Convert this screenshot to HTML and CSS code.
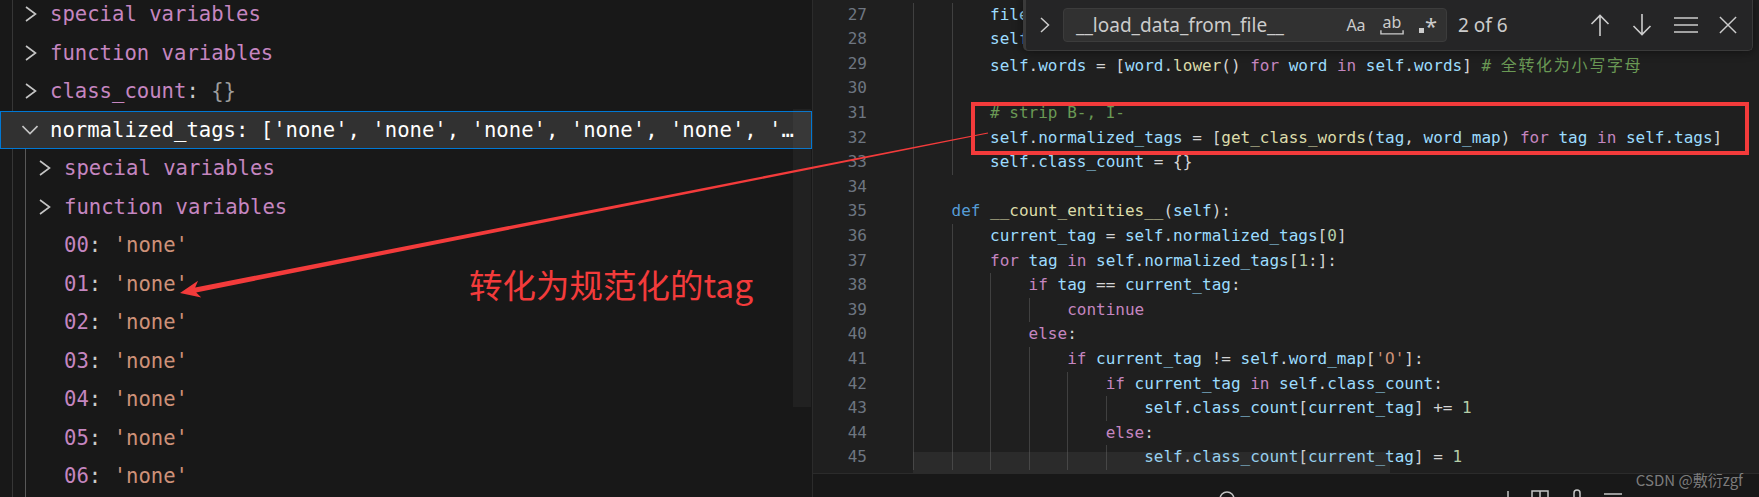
FILE: index.html
```html
<!DOCTYPE html>
<html><head>
<meta charset="utf-8">
<title>normalized_tags - debug</title>
<link rel="stylesheet" href="styles.css">
</head>
<body>
<div class="win">

<div class="vars">
  <div class="tree">
    <div class="row l0"><span class="twist"><svg viewBox="0 0 16 16"><path d="M4 1l9.5 7L4 15"/></svg></span><span class="nm">special variables</span></div>
    <div class="row l0"><span class="twist"><svg viewBox="0 0 16 16"><path d="M4 1l9.5 7L4 15"/></svg></span><span class="nm">function variables</span></div>
    <div class="row l0"><span class="twist"><svg viewBox="0 0 16 16"><path d="M4 1l9.5 7L4 15"/></svg></span><span class="nm">class_count</span><span class="pu">: </span><span class="ob">{}</span></div>
    <div class="row l0 sel"><span class="twist"><svg class="down" viewBox="0 0 16 16"><path d="M0.5 4l7.5 7.5L15.5 4"/></svg></span><span>normalized_tags: ['none', 'none', 'none', 'none', 'none', '…</span></div>
    <div class="row l1"><span class="twist"><svg viewBox="0 0 16 16"><path d="M4 1l9.5 7L4 15"/></svg></span><span class="nm">special variables</span></div>
    <div class="row l1"><span class="twist"><svg viewBox="0 0 16 16"><path d="M4 1l9.5 7L4 15"/></svg></span><span class="nm">function variables</span></div>
    <div class="row l1"><span class="twist"></span><span class="nm">00</span><span class="pu">: </span><span class="st">'none'</span></div>
    <div class="row l1"><span class="twist"></span><span class="nm">01</span><span class="pu">: </span><span class="st">'none'</span></div>
    <div class="row l1"><span class="twist"></span><span class="nm">02</span><span class="pu">: </span><span class="st">'none'</span></div>
    <div class="row l1"><span class="twist"></span><span class="nm">03</span><span class="pu">: </span><span class="st">'none'</span></div>
    <div class="row l1"><span class="twist"></span><span class="nm">04</span><span class="pu">: </span><span class="st">'none'</span></div>
    <div class="row l1"><span class="twist"></span><span class="nm">05</span><span class="pu">: </span><span class="st">'none'</span></div>
    <div class="row l1"><span class="twist"></span><span class="nm">06</span><span class="pu">: </span><span class="st">'none'</span></div>
    <div class="row l1"><span class="twist"></span></div>
  </div>
  <div class="thumb-v"></div>
</div>

<div class="editor">
  <div class="code">
    <div class="gutter">
      <div>27</div><div>28</div><div>29</div><div>30</div><div>31</div><div>32</div><div>33</div><div>34</div><div>35</div><div>36</div>
      <div>37</div><div>38</div><div>39</div><div>40</div><div>41</div><div>42</div><div>43</div><div>44</div><div>45</div>
    </div>
    <div class="lines">
      <div class="line"><span class="g"></span><span class="g"></span><span class="v">file</span></div>
      <div class="line"><span class="g"></span><span class="g"></span><span class="v">self</span></div>
      <div class="line"><span class="g"></span><span class="g"></span><span class="v">self</span>.<span class="v">words</span> = [<span class="v">word</span>.<span class="f">lower</span>() <span class="k">for</span> <span class="v">word</span> <span class="k">in</span> <span class="v">self</span>.<span class="v">words</span>] <span class="c"># <span class="cjk">全转化为小写字母</span></span></div>
      <div class="line"><span class="g"></span><span class="g"></span></div>
      <div class="line"><span class="g"></span><span class="g"></span><span class="c"># strip B-, I-</span></div>
      <div class="line"><span class="g"></span><span class="g"></span><span class="v">self</span>.<span class="v">normalized_tags</span> = [<span class="f">get_class_words</span>(<span class="v">tag</span>, <span class="v">word_map</span>) <span class="k">for</span> <span class="v">tag</span> <span class="k">in</span> <span class="v">self</span>.<span class="v">tags</span>]</div>
      <div class="line"><span class="g"></span><span class="g"></span><span class="v">self</span>.<span class="v">class_count</span> = {}</div>
      <div class="line"><span class="g"></span></div>
      <div class="line"><span class="g"></span><span class="d">def</span> <span class="f">__count_entities__</span>(<span class="v">self</span>):</div>
      <div class="line"><span class="g"></span><span class="g"></span><span class="v">current_tag</span> = <span class="v">self</span>.<span class="v">normalized_tags</span>[<span class="n">0</span>]</div>
      <div class="line"><span class="g"></span><span class="g"></span><span class="k">for</span> <span class="v">tag</span> <span class="k">in</span> <span class="v">self</span>.<span class="v">normalized_tags</span>[<span class="n">1</span>:]:</div>
      <div class="line"><span class="g"></span><span class="g"></span><span class="g"></span><span class="k">if</span> <span class="v">tag</span> == <span class="v">current_tag</span>:</div>
      <div class="line"><span class="g"></span><span class="g"></span><span class="g"></span><span class="g"></span><span class="k">continue</span></div>
      <div class="line"><span class="g"></span><span class="g"></span><span class="g"></span><span class="k">else</span>:</div>
      <div class="line"><span class="g"></span><span class="g"></span><span class="g"></span><span class="g"></span><span class="k">if</span> <span class="v">current_tag</span> != <span class="v">self</span>.<span class="v">word_map</span>[<span class="s">'O'</span>]:</div>
      <div class="line"><span class="g"></span><span class="g"></span><span class="g"></span><span class="g"></span><span class="g"></span><span class="k">if</span> <span class="v">current_tag</span> <span class="k">in</span> <span class="v">self</span>.<span class="v">class_count</span>:</div>
      <div class="line"><span class="g"></span><span class="g"></span><span class="g"></span><span class="g"></span><span class="g"></span><span class="g"></span><span class="v">self</span>.<span class="v">class_count</span>[<span class="v">current_tag</span>] += <span class="n">1</span></div>
      <div class="line"><span class="g"></span><span class="g"></span><span class="g"></span><span class="g"></span><span class="g"></span><span class="k">else</span>:</div>
      <div class="line"><span class="g"></span><span class="g"></span><span class="g"></span><span class="g"></span><span class="g"></span><span class="g"></span><span class="v">self</span>.<span class="v">class_count</span>[<span class="v">current_tag</span>] = <span class="n">1</span></div>
    </div>
    <div class="thumb-h"></div>
  </div>

  <div class="panel">
    <svg class="pi" style="left:402px" viewBox="0 0 24 12"><circle cx="12" cy="13" r="7"/></svg>
    <svg class="pi" style="left:683px" viewBox="0 0 24 12"><path d="M12 5v8"/></svg>
    <svg class="pi" style="left:715px" viewBox="0 0 24 12"><path d="M4 13V5h16v8M12 5v8"/></svg>
    <svg class="pi" style="left:752px" viewBox="0 0 24 12"><path d="M9 13V7a3 3 0 0 1 6 0v6"/></svg>
    <svg class="pi" style="left:788px" viewBox="0 0 24 12"><path d="M3 8h18"/></svg>
  </div>

  <div class="find">
    <span class="toggle"><svg viewBox="0 0 12 16"><path d="M2 1l7.5 7L2 15"/></svg></span>
    <div class="input">
      <span class="term">__load_data_from_file__</span>
      <span class="opts">
        <span class="opt aa">Aa</span>
        <span class="opt ab">ab<svg viewBox="0 0 26 6"><path d="M1 0v4h24V0"/></svg></span>
        <span class="opt rx"><i class="dot"></i>*</span>
      </span>
    </div>
    <span class="count">2 of 6</span>
    <span class="btns">
      <svg class="ico" viewBox="0 0 22 24"><path d="M11 2.5V23M2.5 11l8.5-8.5 8.5 8.5"/></svg>
      <svg class="ico" viewBox="0 0 22 24"><path d="M11 1v20.5M2.5 13l8.5 8.5 8.5-8.5"/></svg>
      <svg class="ico sel-ico" viewBox="0 0 26 24"><path d="M1 5h24M1 12h24M1 19h24"/></svg>
      <svg class="ico x" viewBox="0 0 20 20"><path d="M1 1l18 18M19 1L1 19"/></svg>
    </span>
  </div>
</div>

<svg class="arrow" viewBox="0 0 1759 497">
  <polygon points="180,293 201.3,297.4 196.2,292.4 988.1,133.6 987.9,132.4 195.2,287.4 198,280.8"/>
</svg>
<div class="box"></div>
<div class="note">转化为规范化的tag</div>
<div class="mark">CSDN @敷衍zgf</div>

</div>
</body>
</html>
```

FILE: styles.css
```css
body { margin: 0; background: #181818; font-family: "DejaVu Sans Mono", monospace; }
.win { display: flex; width: 1759px; height: 497px; position: relative; overflow: hidden; }

/* variables tree */
.vars { width: 812px; flex: none; border-right: 1px solid #2b2b2b; position: relative; overflow: hidden; font-size: 20.6px; color: #cccccc; }
.tree { margin-top: -5px; }
.row { height: 38.5px; display: flex; align-items: center; white-space: pre; box-sizing: border-box; }
.l0 { padding-left: 22px; background: linear-gradient(#363636, #363636) 12px 0 / 1px 100% no-repeat; }
.l1 { padding-left: 36px; background: linear-gradient(#363636, #363636) 12px 0 / 1px 100% no-repeat, linear-gradient(#585858, #585858) 25px 0 / 1px 100% no-repeat; }
.row.sel { background: #313131; border: 1px solid #0078d4; padding-left: 21px; color: #ffffff; }
.twist { width: 28px; height: 16px; flex: none; display: flex; }
.twist svg { width: 16px; height: 16px; fill: none; stroke: #c5c5c5; stroke-width: 1.6; }
.nm { color: #c586c0; }
.pu { color: #cccccc; }
.ob { color: #9d9d9d; }
.st { color: #ce9178; }
.thumb-v { position: absolute; left: 793px; top: 109px; width: 18px; height: 298px; background: rgba(121, 121, 121, 0.1); }

/* editor */
.editor { flex: 1; display: flex; flex-direction: column; position: relative; background: #1f1f1f; }
.code { height: 473px; flex: none; display: flex; box-sizing: border-box; padding-top: 2.7px; position: relative; overflow: hidden; font-size: 16px; }
.gutter { width: 54px; flex: none; text-align: right; color: #6e7681; }
.gutter div, .line { height: 24.6px; line-height: 24.6px; }
.lines { margin-left: 46px; flex: 1; color: #d4d4d4; }
.line { white-space: pre; }
.g { display: inline-block; width: 4ch; height: 24.6px; vertical-align: top; background: linear-gradient(#404040, #404040) 0 0 / 1px 100% no-repeat; }
.v { color: #9cdcfe; }
.f { color: #dcdcaa; }
.k { color: #c586c0; }
.d { color: #569cd6; }
.c { color: #6a9955; }
.s { color: #ce9178; }
.n { color: #b5cea8; }
.cjk { font-family: "Noto Sans CJK SC", sans-serif; letter-spacing: 1.7px; }
.thumb-h { position: absolute; left: 100px; top: 452px; width: 477px; height: 21px; background: rgba(121, 121, 121, 0.13); }

.panel { height: 24px; flex: none; background: #181818; border-top: 1px solid #2b2b2b; box-sizing: border-box; position: relative; overflow: hidden; }
.pi { position: absolute; top: 12px; width: 24px; height: 12px; fill: none; stroke: #c5c5c5; stroke-width: 1.5; }

/* find widget */
.find { position: absolute; top: 0; left: 210px; width: 730px; height: 51px; box-sizing: border-box; background: #252526; border: 1px solid #3a3a3a; border-top: none; border-left: 3px solid #3a3a3a; border-radius: 0 0 5px 5px; box-shadow: 0 0 8px 2px rgba(0, 0, 0, 0.36); display: flex; align-items: center; font-family: "Noto Sans", sans-serif; color: #cccccc; }
.toggle { width: 37px; display: flex; justify-content: center; }
.toggle svg { width: 12px; height: 16px; fill: none; stroke: #cccccc; stroke-width: 1.5; }
.input { width: 384px; height: 34px; box-sizing: border-box; background: #313131; border: 1px solid #3c3c3c; border-radius: 4px; display: flex; align-items: center; padding-left: 12px; }
.term { font-size: 19px; }
.opts { margin-left: auto; display: flex; align-items: center; gap: 12px; padding-right: 6px; }
.opt { width: 24px; display: flex; justify-content: center; align-items: center; font-size: 16px; position: relative; }
.ab { flex-direction: column; line-height: 16px; }
.ab svg { width: 24px; height: 6px; fill: none; stroke: #cccccc; stroke-width: 1.5; }
.rx { font-size: 22px; align-items: flex-start; height: 22px; line-height: 22px; }
.dot { display: inline-block; width: 5px; height: 5px; background: #cccccc; margin-top: 14px; margin-right: 1px; }
.count { font-size: 19px; margin-left: 11px; }
.btns { margin-left: auto; display: flex; align-items: center; gap: 20px; padding-right: 15px; }
.ico { width: 22px; height: 24px; fill: none; stroke: #cccccc; stroke-width: 1.6; }
.sel-ico { width: 26px; }
.ico.x { width: 18px; height: 18px; }

/* annotations */
.arrow { position: absolute; left: 0; top: 0; width: 1759px; height: 497px; pointer-events: none; }
.arrow polygon { fill: #f33b3b; }
.box { position: absolute; left: 971px; top: 102px; width: 778px; height: 53px; box-sizing: border-box; border: 4px solid #f33b3b; }
.note { position: absolute; left: 469px; top: 267px; font-family: "Noto Sans CJK SC", sans-serif; font-size: 33.5px; line-height: 1; color: #f33b3b; }
.mark { position: absolute; right: 16px; top: 469px; font-family: "Noto Sans CJK SC", sans-serif; font-size: 15px; color: rgba(210, 210, 210, 0.55); }
```
